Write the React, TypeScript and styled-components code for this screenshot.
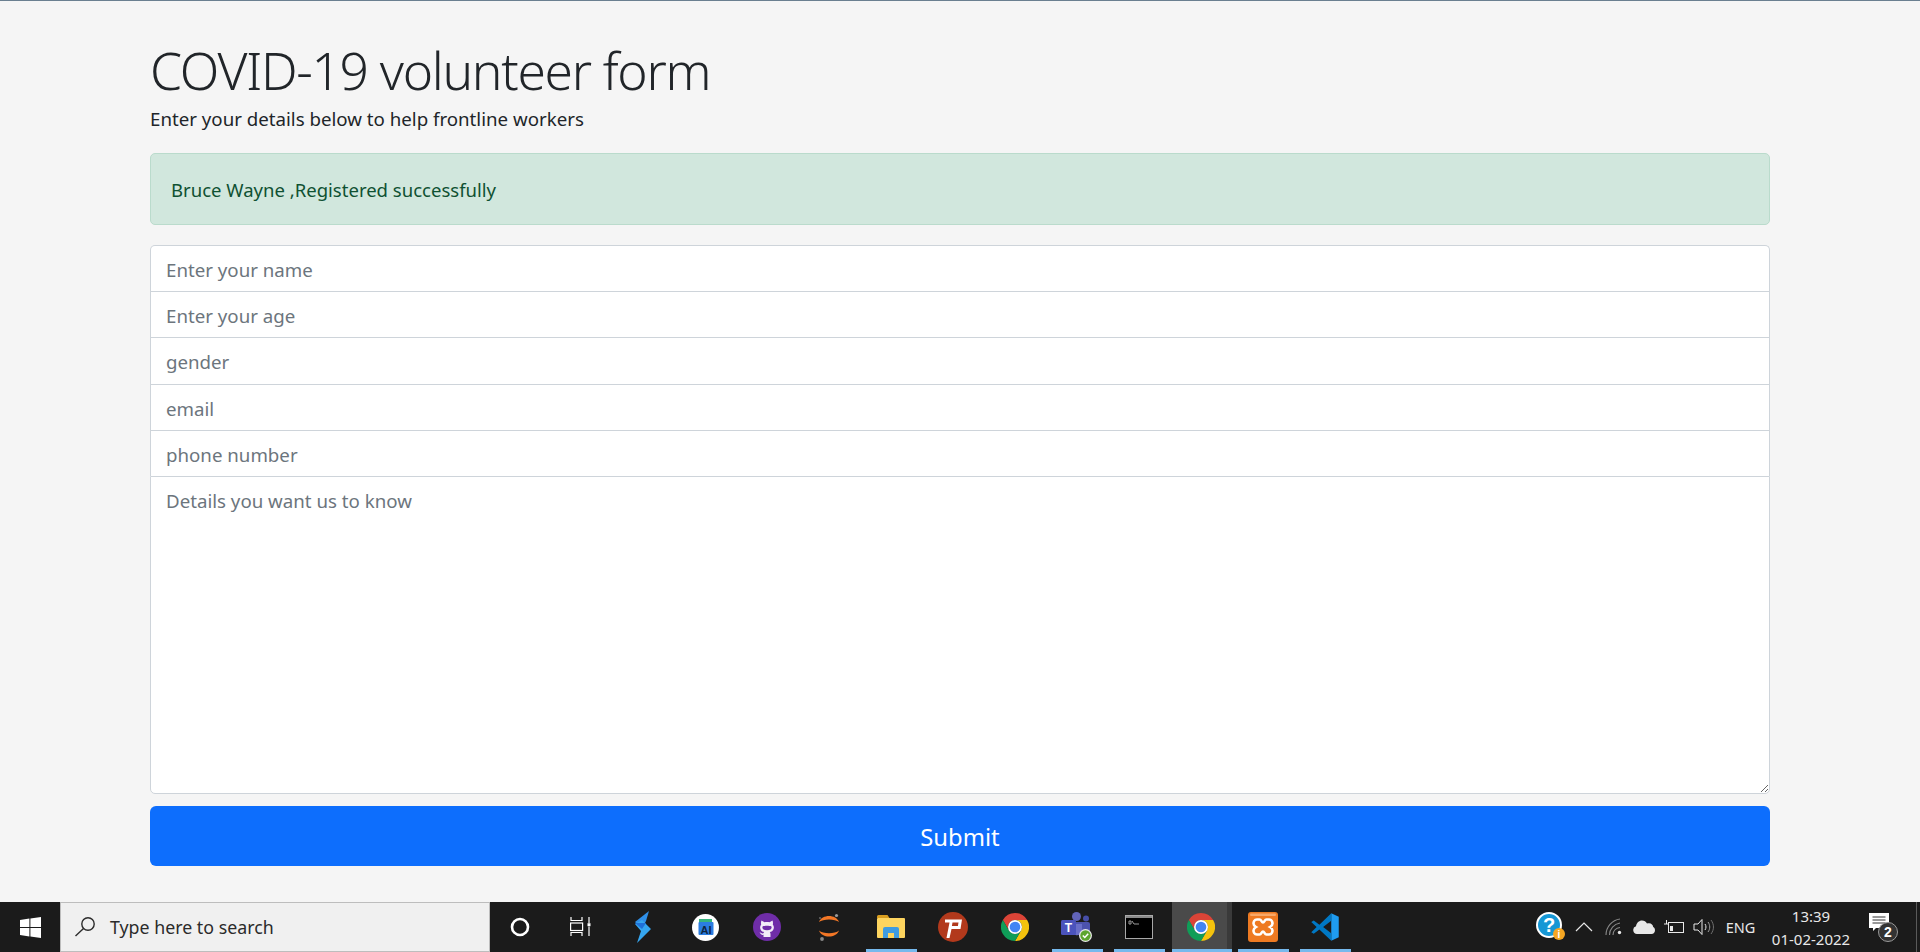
import React from "react";
import styled, { createGlobalStyle } from "styled-components";

const FONT = `"Noto Sans", "Open Sans", "Liberation Sans", sans-serif`;

const Global = createGlobalStyle`
  html, body { margin: 0; padding: 0; height: 100%; background: #f5f5f5; }
  * { box-sizing: border-box; }
  #root { height: 100%; }
`;

const Page = styled.div`
  height: 952px;
  display: flex;
  flex-direction: column;
  font-family: ${FONT};
  border-top: 1px solid #6a7f90;
  overflow: hidden;
`;
const Main = styled.main`
  flex: 1;
  padding: 0 150px;
  display: flex;
  flex-direction: column;
`;
const Title = styled.h1`
  margin: 34px 0 0;
  font-size: 51.5px;
  line-height: 70px;
  font-weight: 300;
  letter-spacing: -1.3px;
  color: #212529;
`;
const Subtitle = styled.p`
  margin: 1px 0 0;
  font-size: 18.7px;
  line-height: 26px;
  color: #212529;
`;
const Alert = styled.div`
  margin-top: 21px;
  height: 72px;
  padding: 0 20px;
  display: flex;
  align-items: center;
  font-size: 18.55px;
  background: #d1e7dd;
  border: 1px solid #badbcc;
  border-radius: 5px;
  color: #0f5132;
`;
const Form = styled.form`
  margin-top: 20px;
  display: flex;
  flex-direction: column;
`;
const fieldStyle = `
  display: block;
  width: 100%;
  padding: 2px 15px 0;
  font-family: ${FONT};
  font-size: 18.7px;
  color: #212529;
  background: #fff;
  border: 1px solid #ced4da;
  outline: none;
  &::placeholder { color: #6c757d; opacity: 1; }
`;
const Field = styled.input<{ $first?: boolean }>`
  ${fieldStyle}
  height: 46.2px;
  border-bottom: 0;
  border-radius: ${(p) => (p.$first ? "5px 5px 0 0" : "0")};
`;
const Details = styled.textarea`
  ${fieldStyle}
  height: 318px;
  padding-top: 11px;
  line-height: 26px;
  border-radius: 0 0 5px 5px;
  resize: vertical;
`;
const Submit = styled.button`
  margin-top: 12px;
  height: 60px;
  padding: 2px 0 0;
  border: 0;
  border-radius: 6px;
  background: #0d6efd;
  color: #fff;
  font-family: ${FONT};
  font-size: 23.8px;
`;

const Taskbar = styled.footer`
  height: 50px;
  flex: none;
  display: flex;
  align-items: stretch;
  background: #1b1b1b;
  color: #f0f0f0;
`;
const StartButton = styled.div`
  width: 60px;
  display: flex;
  align-items: center;
  justify-content: center;
`;
const SearchBox = styled.div`
  width: 430px;
  display: flex;
  align-items: center;
  gap: 14px;
  padding-left: 13px;
  background: #f0f0f0;
  border: 1px solid #bdbdbd;
  color: #2b2b2b;
  font-size: 17.8px;
`;
const AppSlots = styled.div`
  display: flex;
  align-items: stretch;
`;
const AppSlot = styled.div<{ $wide?: boolean; $open?: boolean; $active?: boolean }>`
  position: relative;
  width: ${(p) => (p.$wide ? "60px" : "62px")};
  display: flex;
  align-items: center;
  justify-content: center;
  background: ${(p) =>
    p.$active ? "linear-gradient(90deg, #1b1b1b 2px, #4a4a4a 2px, #4a4a4a 57px, #3a3a3a 57px, #3a3a3a 62px)" : "none"};
  &::after {
    content: "";
    display: ${(p) => (p.$open ? "block" : "none")};
    position: absolute;
    left: ${(p) => (p.$active ? "2px" : "6px")};
    right: ${(p) => (p.$active ? "0" : "5px")};
    bottom: 0;
    height: 3px;
    background: #76b9ed;
  }
`;
const Tray = styled.div`
  margin-left: auto;
  display: flex;
  align-items: center;
  padding-right: 3px;
`;
const TrayIcon = styled.div<{ $w: number }>`
  width: ${(p) => p.$w}px;
  display: flex;
  align-items: center;
  justify-content: center;
`;
const Lang = styled.div`
  width: 46px;
  padding-right: 3px;
  text-align: center;
  font-size: 14.5px;
  color: #e8e8e8;
`;
const Clock = styled.div`
  width: 92px;
  padding-top: 2px;
  text-align: center;
  font-size: 15px;
  line-height: 23px;
  color: #e8e8e8;
`;
const DesktopEdge = styled.div`
  width: 1px;
  height: 100%;
  margin-left: 7px;
  background: #5a5a5a;
`;

const WindowsLogo = () => (
  <svg width="21" height="21" viewBox="0 0 21 21" fill="#fff">
    <path d="M0 3l9.4-1.4v8.4H0zM10.4 1.4L21 0v10H10.4zM0 11h9.4v8.4L0 18zM10.4 11H21v10l-10.6-1.4z" />
  </svg>
);
const Magnifier = () => (
  <svg width="22" height="20" viewBox="0 0 22 20" fill="none" stroke="#2b2b2b" strokeWidth="1.4">
    <circle cx="14" cy="7" r="6.2" />
    <path d="M9.5 11.5L1.5 19" />
  </svg>
);
const CortanaRing = () => (
  <svg width="20" height="20" viewBox="0 0 20 20" fill="none">
    <circle cx="10" cy="10" r="8" stroke="#fff" strokeWidth="2.6" />
  </svg>
);
const TaskView = () => (
  <svg width="22" height="20" viewBox="0 0 22 20" fill="none" stroke="#fff" strokeWidth="1.2">
    <path d="M1 0v3.5h11V0M1 19v-3.5h11V19" />
    <rect x="0.6" y="6" width="12" height="7.5" />
    <path d="M19 0v6M19 9.5V19" />
    <rect x="17.5" y="6.2" width="3" height="3" fill="#fff" stroke="none" />
  </svg>
);
const Blade = () => (
  <svg width="18" height="32" viewBox="0 0 18 32">
    <path d="M15 0L1 11l7 7 4-8z" fill="#2f8fe8" />
    <path d="M8 9l9 9L3 32l4-12-6-7z" fill="#35a6f0" />
    <path d="M1 12l7 6 4-6z" fill="#1f70d8" />
  </svg>
);
const AiBadge = () => (
  <svg width="27" height="27" viewBox="0 0 27 27">
    <circle cx="13.5" cy="13.5" r="13.5" fill="#fff" />
    <rect x="7" y="5" width="13" height="5" fill="#36b37e" />
    <rect x="6.500" y="8" width="15" height="13" rx="1" fill="#2b7de0" />
    <text x="14" y="20" fontSize="11" fontWeight="700" fill="#10263f" textAnchor="middle" fontFamily="Liberation Sans">AI</text>
  </svg>
);
const GithubBadge = () => (
  <svg width="28" height="28" viewBox="0 0 28 28">
    <circle cx="14" cy="14" r="14" fill="#6f2da8" />
    <path
      d="M8.500 7.500L11.500 9.300C13 8.900 15 8.900 16.500 9.300L19.500 7.500C20.100 9 20.100 10.500 19.800 11.500C20.800 12.600 21 14 20.800 15.200C20.500 17.700 18.500 18.800 16.800 19.100C17.300 19.700 17.500 20.300 17.500 21.200V24H10.500V21.800C8.500 22.200 7.500 21 6.500 19.300C7.500 19.300 8.500 20.800 10.500 20.300C10.600 19.800 10.800 19.400 11.200 19.100C9.500 18.800 7.500 17.700 7.200 15.200C7 14 7.200 12.600 8.200 11.500C7.900 10.500 7.900 9 8.500 7.500z"
      fill="#f2ecf8"
    />
    <path d="M9.800 13.200C11.500 12.500 16.500 12.500 18.200 13.200C19.300 14.800 18.200 17.200 14 17.200C9.800 17.200 8.700 14.800 9.800 13.200z" fill="#6f2da8" />
  </svg>
);
const Jupyter = () => (
  <svg width="24" height="28" viewBox="0 0 24 28">
    <path d="M2 9C5 1 19 1 22 9C18 5.500 6 5.500 2 9z" fill="#f37726" />
    <path d="M2 17.500C5 25.500 19 25.500 22 17.500C18 21 6 21 2 17.500z" fill="#f37726" />
    <circle cx="19.500" cy="2.500" r="1.600" fill="#9a9a9a" />
    <circle cx="5" cy="26" r="1.900" fill="#8a8a8a" />
    <circle cx="3" cy="5" r="1" fill="#6a6a6a" />
  </svg>
);
const Folder = () => (
  <svg width="28" height="24" viewBox="0 0 28 24">
    <path d="M0 1.500A1.500 1.500 0 0 1 1.500 0h9l2 3H0z" fill="#d99e1f" />
    <rect y="3" width="28" height="20" rx="1" fill="#fdd45f" />
    <path d="M6 23V14a2 2 0 0 1 2-2h12a2 2 0 0 1 2 2v9h-5v-5h-6v5z" fill="#3f9be0" />
  </svg>
);
const Psiphon = () => (
  <svg width="30" height="30" viewBox="0 0 30 30">
    <circle cx="15" cy="15" r="15" fill="#b2391c" />
    <path d="M7 7.500h17l-1.500 9.500H13.500L11.500 26h-3L11.500 10.500H7zM14.500 10.500l-.6 3.500h6l.6-3.500z" fill="#fff" fillRule="evenodd" />
  </svg>
);
const Chrome = () => (
  <svg width="28" height="28" viewBox="1 1 22 22">
    <path d="M12 1a11 11 0 0 1 9.530 5.500H12a5.500 5.500 0 0 0-4.760 8.250L2.470 6.500A11 11 0 0 1 12 1z" fill="#db4437" />
    <path d="M21.530 6.500A11 11 0 0 1 12 23l4.760-8.250A5.500 5.500 0 0 0 12 6.500z" fill="#f4c20d" />
    <path d="M12 23A11 11 0 0 1 2.470 6.500l4.770 8.250a5.500 5.500 0 0 0 9.520 0z" fill="#0f9d58" />
    <circle cx="12" cy="12" r="5.500" fill="#fff" />
    <circle cx="12" cy="12" r="4.200" fill="#4285f4" />
  </svg>
);
const Teams = () => (
  <svg width="32" height="32" viewBox="0 0 32 32">
    <circle cx="15.500" cy="5.500" r="4.500" fill="#6264b8" />
    <circle cx="25" cy="7.500" r="3" fill="#464ea8" />
    <rect x="9" y="11" width="20" height="12" rx="2" fill="#4c52ad" />
    <path d="M10 13h11v9a7 7 0 0 1-11-1z" fill="#6a6fc8" />
    <rect x="0" y="9" width="15" height="15" rx="1.500" fill="#4b53bc" />
    <text x="7.500" y="21" fontSize="12" fontWeight="700" fill="#fff" textAnchor="middle" fontFamily="Liberation Sans">T</text>
    <circle cx="24.500" cy="24.500" r="6.500" fill="#e8e8e8" />
    <circle cx="24.500" cy="24.500" r="5.200" fill="#5da52e" />
    <path d="M21.800 24.500l2 2 3.400-3.800" fill="none" stroke="#fff" strokeWidth="1.500" />
  </svg>
);
const Terminal = () => (
  <svg width="28" height="24" viewBox="0 0 28 24">
    <rect x="0.500" y="0.500" width="27" height="23" fill="#000" stroke="#a8a8a8" />
    <rect x="1" y="1" width="26" height="2" fill="#8a8a8a" />
    <path d="M4 6h2v3H4zM7 6l2 3h5" fill="none" stroke="#9a9a9a" strokeWidth="1" />
  </svg>
);
const Xampp = () => (
  <svg width="30" height="30" viewBox="0 0 30 30">
    <rect width="30" height="30" rx="3" fill="#ee7a22" />
    <path
      d="M9 7.500h2.500c2 0 2 3 3.500 3s1.500-3 3.500-3H21c3 0 3.500 3 3.500 4 0 2-2.500 3.500-2.500 3.500s2.500 1.500 2.500 3.500c0 1-.5 4-3.500 4h-2.500c-2 0-2-3-3.500-3s-1.500 3-3.500 3H9c-3 0-3.500-3-3.500-4 0-2 2.500-3.500 2.500-3.500S5.500 13.500 5.500 11.500c0-1 .5-4 3.500-4z"
      fill="none"
      stroke="#fff"
      strokeWidth="2.600"
    />
    <rect x="2" y="1.500" width="26" height="2.500" rx="1.200" fill="#f8a868" />
  </svg>
);
const VSCode = () => (
  <svg width="30" height="30" viewBox="0 0 24 24">
    <path d="M17 1l6 2.800v16.400L17 23z" fill="#1f9cf0" />
    <path d="M17 1L7.500 10.100 3 6.700 1 7.900 5.300 12 1 16.100l2 1.200 4.500-3.400L17 23v-6l-6.500-5L17 7z" fill="#0078c4" />
  </svg>
);
const HelpBadge = () => (
  <svg width="30" height="30" viewBox="0 0 30 30">
    <circle cx="13" cy="13" r="12" fill="#1597d5" stroke="#fff" strokeWidth="2" />
    <text x="13" y="20" fontSize="20" fontWeight="700" fill="#fff" textAnchor="middle" fontFamily="Liberation Sans">?</text>
    <circle cx="23" cy="22" r="6" fill="#f5a623" />
    <text x="23" y="26" fontSize="10" fontWeight="700" fill="#fff" textAnchor="middle" fontFamily="Liberation Sans">i</text>
  </svg>
);
const Chevron = () => (
  <svg width="18" height="10" viewBox="0 0 18 10" fill="none" stroke="#e8e8e8" strokeWidth="1.200">
    <path d="M1 9l8-8 8 8" />
  </svg>
);
const Wifi = () => (
  <svg width="18" height="18" viewBox="0 0 18 18" fill="none" stroke="#8a8a8a" strokeWidth="1.100">
    <path d="M1 17C1 9 7 2 15 1M4.500 17C4.500 11 9 6 15 5M8 17C8 13 11 10 15 9.500" />
    <circle cx="14.500" cy="14.500" r="1.700" fill="#e8e8e8" stroke="none" />
  </svg>
);
const Cloud = () => (
  <svg width="22" height="14" viewBox="0 0 22 14" fill="#e8e8e8">
    <path d="M4 14a4 4 0 0 1-1-7.800C3.500 3 6 .6 9 .6c2.200 0 4 1.200 5 3 .6-.3 1.200-.4 2-.4 2.500 0 4 1.800 4.200 3.800 1.200.6 1.800 1.800 1.800 3.200 0 2.200-1.500 3.800-3.500 3.800z" />
  </svg>
);
const Battery = () => (
  <svg width="20" height="14" viewBox="0 0 20 14" fill="none" stroke="#e8e8e8" strokeWidth="1">
    <rect x="4.500" y="2.500" width="15" height="10" />
    <rect x="6" y="6" width="3" height="5" fill="#e8e8e8" stroke="none" />
    <path d="M0 4h5M2.500 0v4" />
  </svg>
);
const Speaker = () => (
  <svg width="22" height="18" viewBox="0 0 22 18" fill="none" stroke="#e8e8e8" strokeWidth="1">
    <path d="M1 6h4l4-4.500v15L5 12H1z" />
    <path d="M12 6c1.300 1.800 1.300 4.200 0 6" />
    <path d="M15 4c2.300 3 2.300 7 0 10" stroke="#a0a0a0" />
    <path d="M18 2c3.300 4.500 3.300 9.500 0 14" stroke="#707070" />
  </svg>
);
const Notification = () => (
  <svg width="32" height="30" viewBox="0 0 32 30">
    <path d="M2 1h20v15H9l-3 3v-3H2z" fill="#fff" />
    <path d="M5.500 5h13M5.500 8h13M5.500 11h13" stroke="#333" strokeWidth="1" />
    <circle cx="21" cy="20" r="9.500" fill="#333" stroke="#9a9a9a" strokeWidth="1" />
    <text x="21" y="25" fontSize="14" fontWeight="700" fill="#fff" textAnchor="middle" fontFamily="Liberation Sans">2</text>
  </svg>
);

const placeholders = ["Enter your name", "Enter your age", "gender", "email", "phone number"];

export default function App() {
  return (
    <>
      <Global />
      <Page>
        <Main>
          <Title>COVID-19 volunteer form</Title>
          <Subtitle>Enter your details below to help frontline workers</Subtitle>
          <Alert>Bruce Wayne ,Registered successfully</Alert>
          <Form onSubmit={(e) => e.preventDefault()}>
            {placeholders.map((text, i) => (
              <Field key={text} placeholder={text} $first={i === 0} />
            ))}
            <Details placeholder="Details you want us to know" />
            <Submit type="submit">Submit</Submit>
          </Form>
        </Main>
        <Taskbar>
          <StartButton>
            <WindowsLogo />
          </StartButton>
          <SearchBox>
            <Magnifier />
            <span>Type here to search</span>
          </SearchBox>
          <AppSlots>
            <AppSlot $wide><CortanaRing /></AppSlot>
            <AppSlot><TaskView /></AppSlot>
            <AppSlot><Blade /></AppSlot>
            <AppSlot><AiBadge /></AppSlot>
            <AppSlot><GithubBadge /></AppSlot>
            <AppSlot><Jupyter /></AppSlot>
            <AppSlot $open><Folder /></AppSlot>
            <AppSlot><Psiphon /></AppSlot>
            <AppSlot><Chrome /></AppSlot>
            <AppSlot $open><Teams /></AppSlot>
            <AppSlot $open><Terminal /></AppSlot>
            <AppSlot $open $active><Chrome /></AppSlot>
            <AppSlot $open><Xampp /></AppSlot>
            <AppSlot $open><VSCode /></AppSlot>
          </AppSlots>
          <Tray>
            <TrayIcon $w={36}><HelpBadge /></TrayIcon>
            <TrayIcon $w={30}><Chevron /></TrayIcon>
            <TrayIcon $w={30}><Wifi /></TrayIcon>
            <TrayIcon $w={30}><Cloud /></TrayIcon>
            <TrayIcon $w={30}><Battery /></TrayIcon>
            <TrayIcon $w={30}><Speaker /></TrayIcon>
            <Lang>ENG</Lang>
            <Clock>
              13:39
              <br />
              01-02-2022
            </Clock>
            <TrayIcon $w={52}><Notification /></TrayIcon>
            <DesktopEdge />
          </Tray>
        </Taskbar>
      </Page>
    </>
  );
}
